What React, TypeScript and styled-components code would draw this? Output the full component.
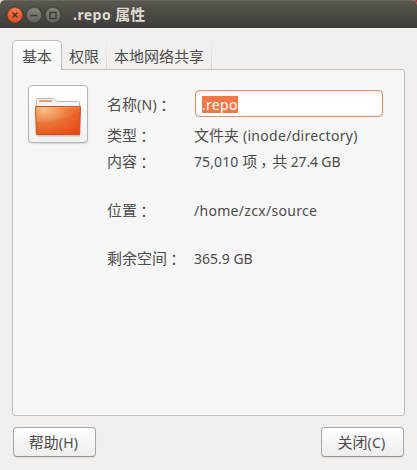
import React from 'react';
import styled, { createGlobalStyle } from 'styled-components';

const Global = createGlobalStyle`
  * { box-sizing: border-box; }
  body { margin: 0; background: linear-gradient(90deg, #d3d6d8 50%, #b3312a 50%); }
`;

const Window = styled.main`
  width: 417px;
  height: 470px;
  display: flex;
  flex-direction: column;
  background: #f1f0ee;
  color: #4c4c4c;
  font: 15px/20px "Noto Sans", "Noto Sans CJK SC", sans-serif;
  border-radius: 5px 5px 0 0;
  overflow: hidden;
  white-space: pre;
`;

const TitleBar = styled.header`
  height: 28px;
  flex: none;
  display: flex;
  align-items: center;
  gap: 3px;
  padding-left: 7px;
  background: linear-gradient(#59564e, #3d3c38);
  border-top: 1px solid #69665d;
`;

const WindowButton = styled.button<{ $close?: boolean }>`
  width: 16px;
  height: 16px;
  padding: 0;
  display: grid;
  place-items: center;
  border: 1px solid ${p => (p.$close ? '#a84429' : '#55534d')};
  border-radius: 50%;
  background: ${p => (p.$close ? 'linear-gradient(#f5794f, #e3511f)' : 'linear-gradient(#86847c, #66645e)')};
  box-shadow: 0 0 0 0.5px #34332f;
`;

const Title = styled.h1`
  margin: 0 0 0 9px;
  font: 700 14px/20px "Noto Sans", "Noto Sans CJK SC", sans-serif;
  letter-spacing: 0.45px;
  color: #dfdbd2;
`;

const TitleHan = styled.span`
  font-size: 15px;
  letter-spacing: 0;
`;

const Latin = styled.span<{ $track?: number }>`
  font-family: "Noto Sans", sans-serif;
  font-size: 14px;
  letter-spacing: ${p => p.$track ?? 0}px;
`;

const Punct = styled.span<{ $comma?: boolean }>`
  display: inline-block;
  height: 15px;
  line-height: 15px;
  transform: ${p => (p.$comma ? 'translate(-1px, 4px)' : 'translate(-0.5px, 1px)')};
  font-family: "Noto Sans CJK TC", sans-serif;
`;

const Tabs = styled.nav`
  height: 30px;
  flex: none;
  display: flex;
  align-items: flex-end;
  margin: 12px 12px -1px;
  position: relative;
`;

const Tab = styled.div<{ $active?: boolean; $width: number }>`
  width: ${p => p.$width}px;
  height: 30px;
  padding: ${p => (p.$active ? '5px 0 0 9px' : '6px 0 0 7px')};
  border: 1px solid ${p => (p.$active ? '#c2bfbb' : 'transparent')};
  border-bottom: 0;
  border-radius: ${p => (p.$active ? '5px 5px 0 0' : '0')};
  background: ${p => (p.$active ? 'linear-gradient(#fafafa, #f6f6f6)' : 'none')};
  ${p => !p.$active && 'height: 29px; margin-bottom: 1px; border-image: linear-gradient(#f1f0ee, #d9d7d4) 1; border-width: 0 1px 0 0;'}
`;

const Panel = styled.section`
  width: 393px;
  height: 347px;
  flex: none;
  display: flex;
  margin-left: 12px;
  padding: 15px 0 0 15px;
  border: 1px solid #c2bfbb;
  border-radius: 0 3px 3px 3px;
  background: #f6f6f6;
`;

const IconButton = styled.button`
  width: 60px;
  height: 58px;
  flex: none;
  padding: 0;
  border: 1px solid #b5b5b5;
  border-radius: 4px;
  background: linear-gradient(#fff, #f1f1f1);
  box-shadow: 0 1px 1px #d8d8d8;
`;

const Fields = styled.dl`
  margin: 5px 0 0 19px;
  display: grid;
  grid-template-columns: 87px 189px;
  grid-template-rows: 31px 26px 49px 48px 28px;
  align-content: start;
`;

const Label = styled.dt`
  height: 28px;
  line-height: 28px;
`;

const Value = styled.dd`
  margin: 0;
  height: 28px;
  line-height: 28px;
`;

const NameInput = styled.div`
  height: 27px;
  margin-left: 1px;
  padding: 4px 6px;
  line-height: 17px;
  border: 1px solid #e58d6c;
  border-radius: 4px;
  background: linear-gradient(#f4f4f4, #fff 8px);
  box-shadow: inset 0 0 1px #f0a184;
`;

const Selection = styled.span`
  display: block;
  width: 36px;
  height: 17px;
  margin-top: 1px;
  background: #f07746;
  color: #fff;
`;

const Footer = styled.footer`
  display: flex;
  justify-content: space-between;
  padding: 11px 13px 0;
`;

const Button = styled.button`
  width: 83px;
  height: 30px;
  padding: 0 2px 0 0;
  border: 1px solid #a9a7a5;
  border-bottom-color: #979593;
  border-radius: 4px;
  background: linear-gradient(#fff, #ededed);
  box-shadow: 0 1px 1px #dfdddb;
  color: #4c4c4c;
  font: 15px/20px "Noto Sans", "Noto Sans CJK SC", sans-serif;
`;

const Folder = () => (
  <svg width="58" height="56" viewBox="0 0 58 56">
    <defs>
      <radialGradient id="front" cx=".2" cy=".1" r="1">
        <stop offset="0" stopColor="#f4c186" />
        <stop offset=".5" stopColor="#ed7f42" />
        <stop offset="1" stopColor="#e64b16" />
      </radialGradient>
      <linearGradient id="shade" x2="0" y2="1">
        <stop offset="0" stopColor="#d84b14" stopOpacity=".28" />
        <stop offset="1" stopColor="#e9571d" stopOpacity=".1" />
      </linearGradient>
    </defs>
    <path d="M7.5 48V13.5q0-1 1-1h16l4 3h21q1 0 1 1V48" fill="#f5f5f5" stroke="#b9b9b9" />
    <path d="M10 15h13" stroke="#ef9b69" strokeWidth="2" />
    <path d="M8 49.7h43" stroke="#c9c2bf" strokeWidth="1.5" />
    <path d="M6.5 20.5h45l-.8 28H7.3z" fill="url(#front)" stroke="#d4511d" />
    <path d="M7 36q25-1 44-10l-.8 22H7.5z" fill="url(#shade)" />
    <path d="M7.5 21.5h43" stroke="#f8bf91" opacity=".4" />
  </svg>
);

const controls = [
  { name: '关闭', d: 'M4.5 4.5l5 5M9.5 4.5l-5 5' },
  { name: '最小化', d: 'M3.5 7.5h7' },
  { name: '最大化', d: 'M4 4.5h6v6h-6z' },
];

export default function App() {
  return (
    <>
      <Global />
      <Window>
        <TitleBar>
          {controls.map((c, i) => (
            <WindowButton key={c.name} $close={i === 0} aria-label={c.name}>
              <svg width="14" height="14" viewBox="0 0 14 14">
                <path d={c.d} fill="none" stroke="#3b3a36" strokeWidth="1.3" />
              </svg>
            </WindowButton>
          ))}
          <Title>.repo <TitleHan>属性</TitleHan></Title>
        </TitleBar>
        <Tabs>
          <Tab $active $width={50}>基本</Tab>
          <Tab $width={45}>权限</Tab>
          <Tab $width={105}>本地网络共享</Tab>
        </Tabs>
        <Panel>
          <IconButton><Folder /></IconButton>
          <Fields>
            <Label>名称<Latin $track={0.3}>(N)</Latin><Punct>：</Punct></Label>
            <Value><NameInput><Selection><Latin $track={0.3}>.repo</Latin></Selection></NameInput></Value>
            <Label>类型<Punct>：</Punct></Label>
            <Value>文件夹<Latin $track={0.3}> (inode/directory)</Latin></Value>
            <Label>内容<Punct>：</Punct></Label>
            <Value><Latin $track={0.1}>75,010 </Latin>项<Punct $comma>，</Punct>共<Latin $track={-0.15}> 27.4 GB</Latin></Value>
            <Label>位置<Punct>：</Punct></Label>
            <Value><Latin $track={0.3}>/home/zcx/source</Latin></Value>
            <Label>剩余空间<Punct>：</Punct></Label>
            <Value><Latin>365.9 GB</Latin></Value>
          </Fields>
        </Panel>
        <Footer>
          <Button>帮助<Latin $track={0.3}>(H)</Latin></Button>
          <Button>关闭<Latin $track={0.3}>(C)</Latin></Button>
        </Footer>
      </Window>
    </>
  );
}
